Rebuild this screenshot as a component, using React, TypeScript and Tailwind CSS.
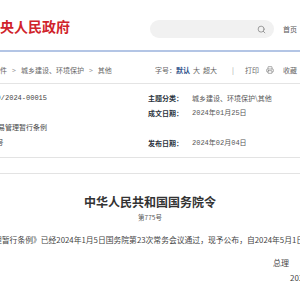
import { Search, Printer, Star } from "lucide-react";

const sans = "font-['Noto_Sans_CJK_SC','Noto_Sans',sans-serif]";
const mono = "font-['Liberation_Mono','Noto_Sans_CJK_SC',monospace]";

const rows = [
  { left: "000014349/2024-00015", label: "主题分类：", value: "城乡建设、环境保护\\其他", h: "h-[16px]" },
  { left: "国务院", label: "成文日期：", value: "2024年01月25日", h: "h-[15px]" },
  { left: "碳排放权交易管理暂行条例", label: "", value: "", h: "h-[15px]" },
  { left: "国令第775号", label: "发布日期：", value: "2024年02月04日", h: "h-[15px]" },
];

export default function App() {
  return (
    <div className={`w-[300px] h-[300px] overflow-hidden bg-white ${sans}`}>
      {/* header */}
      <div className="flex items-start h-[50px] whitespace-nowrap">
        <div className="ml-[-14px] mt-[18px] text-[14px] leading-[16px] font-bold text-[#d0232b] shrink-0 w-[84px]">
          中央人民政府
        </div>
        <div className="ml-[80px] mt-[20px] h-[18px] w-[124px] shrink-0 rounded-full bg-[#f1f1f1] flex items-center justify-end pr-[8px]">
          <Search size={9} strokeWidth={2.2} className="text-[#8a8a8a]" />
        </div>
        <div className="ml-[9px] mt-[24px] text-[7px] leading-[10px] text-[#555] shrink-0">首页</div>
      </div>
      <div className="h-[2px] bg-[#b3c5e5]" />

      {/* breadcrumb + tools */}
      <div className="flex items-center h-[32px] pt-[5px] border-b border-[#e4e4e4] whitespace-nowrap text-[7px] leading-[10px] text-[#666]">
        <div className="flex items-center gap-[5px] ml-[-7px] w-[162px] shrink-0">
          <span>文件</span>
          <span className="text-[#999]">&gt;</span>
          <span>城乡建设、环境保护</span>
          <span className="text-[#999]">&gt;</span>
          <span>其他</span>
        </div>
        <div className="flex items-center shrink-0">
          <span>字号：</span>
          <span className="font-bold text-[#2c4f8a]">默认</span>
          <span className="ml-[3px]">大</span>
          <span className="ml-[3px]">超大</span>
          <span className="ml-[15px] text-[#999]">|</span>
          <span className="ml-[11px]">打印</span>
          <Printer size={8} strokeWidth={1.8} className="ml-[7px] text-[#777]" />
          <span className="ml-[9px]">收藏</span>
          <Star size={7} strokeWidth={1.6} className="ml-[3px] text-[#777]" />
        </div>
      </div>

      {/* info table */}
      <div className="pt-[6px] text-[7px] whitespace-nowrap">
        {rows.map((r) => (
          <div key={r.left} className={`flex items-center ${r.h}`}>
            <div className={`ml-[-37px] w-[185px] shrink-0 text-[#444] ${mono}`}>{r.left}</div>
            <div className="w-[44px] shrink-0 font-bold text-[#2b3340]">{r.label}</div>
            <div className={`text-[#555] ${r.value.startsWith("2024") ? mono : ""}`}>{r.value}</div>
          </div>
        ))}
      </div>
      <div className="mt-[6px] h-[17px] border-y border-[#e3e3e3]" />

      {/* body */}
      <div className="mt-[21px] text-center text-[12px] leading-[14px] font-bold text-[#333] whitespace-nowrap">
        中华人民共和国国务院令
      </div>
      <div className="mt-[3px] text-center text-[6.5px] leading-[10px] text-[#555] whitespace-nowrap">第775号</div>
      <div className="mt-[12px] ml-[-6px] text-[7.8px] leading-[12px] text-[#444] whitespace-nowrap">
        理暂行条例》已经2024年1月5日国务院第23次常务会议通过，现予公布，自2024年5月1日起施行。
      </div>
      <div className="mt-[11px] ml-[273px] text-[8px] leading-[12px] text-[#444] whitespace-nowrap">总理</div>
      <div className="mt-[3px] ml-[290px] text-[8px] leading-[12px] text-[#444] whitespace-nowrap">2024年1月22日</div>
    </div>
  );
}
